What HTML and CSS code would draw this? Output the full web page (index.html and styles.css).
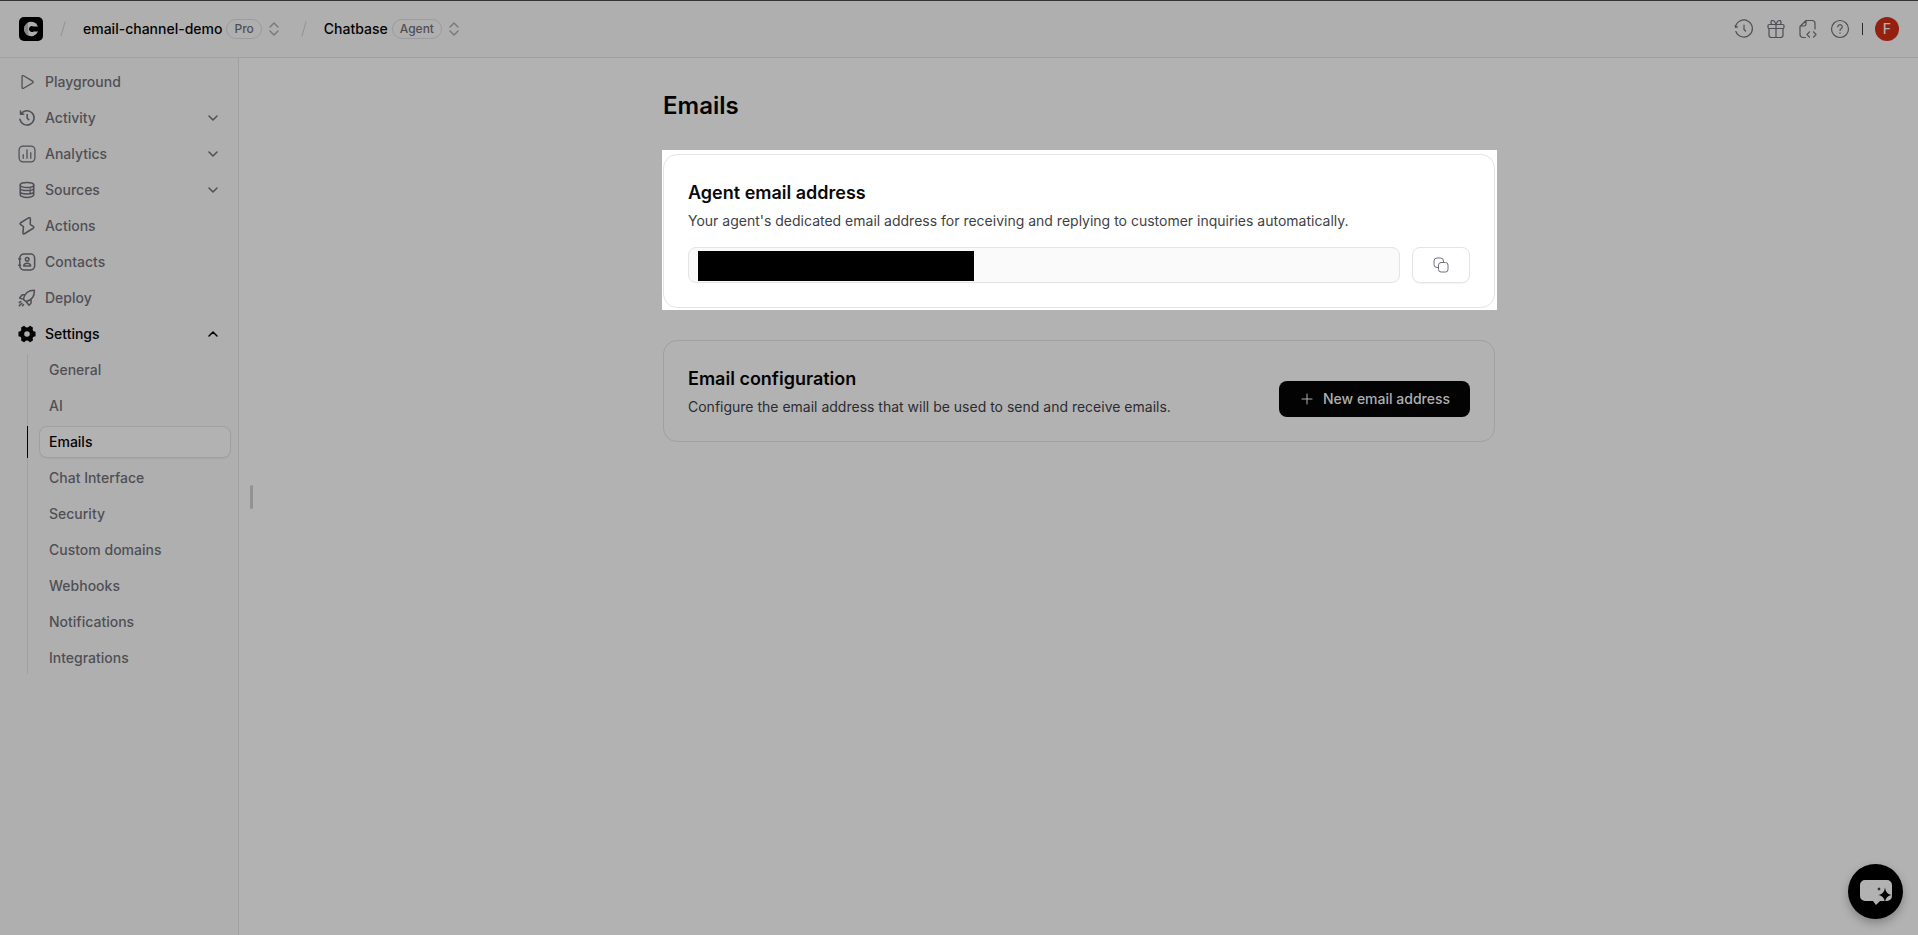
FILE: index.html
```html
<!DOCTYPE html>
<html lang="en">
<head>
<meta charset="utf-8">
<title>Emails</title>
<link rel="stylesheet" href="styles.css">
</head>
<body>
<header class="topbar">
  <nav class="crumbs" aria-label="Breadcrumb">
    <a class="logo" href="#" aria-label="Home">
      <svg width="24" height="24" viewBox="0 0 24 24"><rect width="24" height="24" rx="5" fill="#000"/><path d="M19 9.500A7.200 7.200 0 1 0 19 14.500H14.600A3 3 0 1 1 14.600 9.500Z" fill="#afafaf"/><path d="M9 5.800A7.200 7.200 0 0 0 9.500 18.700L9 12Z" fill="#85858c"/></svg>
    </a>
    <svg class="slash" width="6" height="16" viewBox="0 0 6 16"><path d="M5 1L1 15"/></svg>
    <div class="crumb">
      <a href="#">email-channel-demo</a><span class="pill">Pro</span>
      <button class="icon-btn updown" aria-label="Switch workspace"><svg width="12" height="16" viewBox="0 0 12 16"><path d="M2 6l4-4 4 4M2 10l4 4 4-4"/></svg></button>
    </div>
    <svg class="slash" width="6" height="16" viewBox="0 0 6 16"><path d="M5 1L1 15"/></svg>
    <div class="crumb">
      <a href="#">Chatbase</a><span class="pill">Agent</span>
      <button class="icon-btn updown" aria-label="Switch agent"><svg width="12" height="16" viewBox="0 0 12 16"><path d="M2 6l4-4 4 4M2 10l4 4 4-4"/></svg></button>
    </div>
  </nav>
  <div class="tools">
    <button class="icon-btn" aria-label="History"><svg class="ico thin" viewBox="0 0 20 20"><path d="M1.500 8A8.500 8.500 0 1 1 1.900 12.500M1.200 6.500L1.600 8.300 3.500 7.800M10 6v4.500l1.500 1.500"/></svg></button>
    <button class="icon-btn" aria-label="Gifts"><svg class="ico thin" viewBox="0 0 20 20"><rect x="2" y="5.500" width="16" height="4" rx="1.200"/><path d="M3 9.500V16a2.500 2.500 0 0 0 2.500 2.500h9A2.500 2.500 0 0 0 17 16V9.500M10 5.500v13M10 5.500C9 2.500 7.500 1.200 6 1.600S4.500 4.500 6 5.500M10 5.500c1-3 2.500-4.300 4-3.900s1.500 2.900 0 3.900"/></svg></button>
    <button class="icon-btn" aria-label="Documentation"><svg class="ico thin" viewBox="0 0 20 20"><path d="M7.500 18.500H5A3 3 0 0 1 2 15.500V7.500L8 1.500h6a3 3 0 0 1 3 3V10M8 1.500V5a2 2 0 0 1-2 2H2.200M11.500 12.800L9 15.500l2.500 2.700M15.500 12.800l2.500 2.700-2.500 2.700"/></svg></button>
    <button class="icon-btn" aria-label="Help"><svg class="ico thin" viewBox="0 0 20 20"><circle cx="10" cy="10" r="8.500"/><path d="M7.800 7.800a2.200 2.200 0 1 1 3.300 2c-.8.500-1.100.9-1.100 1.700M10 13.800v.4"/></svg></button>
    <span class="divider"></span>
    <button class="avatar">F</button>
  </div>
</header>
<div class="shell">
  <aside class="sidebar">
    <nav aria-label="Agent">
      <a class="item" href="#"><svg class="ico thin" viewBox="0 0 20 20"><path d="M4.500 4v12c0 1 .8 1.500 1.700 1l10-5.800c.9-.5.900-1.700 0-2.200L6.200 3c-.9-.5-1.700 0-1.700 1Z"/></svg>Playground</a>
      <button class="item"><svg class="ico" viewBox="0 0 20 20"><path d="M2.800 2.200v3.600h3.600M3.200 5.800A7.900 7.900 0 1 1 2.200 11.500M10.200 6v4.300l1.800 1.500"/></svg>Activity<svg class="chev" viewBox="0 0 12 12"><path d="M2 4l4 4 4-4"/></svg></button>
      <button class="item"><svg class="ico thin" viewBox="0 0 20 20"><rect x="1.200" y="1.200" width="17.600" height="17.600" rx="4.500"/><path d="M5.800 14.800v-4M10 14.800V5.500M14.200 14.800V8.500"/></svg>Analytics<svg class="chev" viewBox="0 0 12 12"><path d="M2 4l4 4 4-4"/></svg></button>
      <button class="item"><svg class="ico" viewBox="0 0 20 20"><ellipse cx="10" cy="4.500" rx="7.500" ry="2.800"/><path d="M2.500 4.500v10.800c0 1.600 3.400 3 7.500 3s7.500-1.400 7.500-3V4.500M2.500 8c0 1.500 3.400 2.600 7.500 2.600S17.500 9.500 17.500 8M2.500 11.700c0 1.500 3.400 2.700 7.500 2.700s7.500-1.200 7.500-2.700M13.500 8.500v.2M13.500 12.200v.2"/></svg>Sources<svg class="chev" viewBox="0 0 12 12"><path d="M2 4l4 4 4-4"/></svg></button>
      <a class="item" href="#"><svg class="ico" viewBox="0 0 20 20"><path d="M11.700 1L3 6.400c-.9.600-.9 1.500-.1 2l2.600 1.700c.5.300.6.700.5 1.200L5.500 17.600c-.1 1.100.8 1.600 1.600 1l9.800-6.100c.9-.6.900-1.500.1-2l-2.800-1.700c-.5-.3-.6-.7-.6-1.200l.2-5.500c0-1.200-1-1.700-2.100-1.100Z"/></svg>Actions</a>
      <a class="item" href="#"><svg class="ico" viewBox="0 0 20 20"><rect x="2" y="1.200" width="16.500" height="17.600" rx="4.500"/><circle cx="10.200" cy="7" r="2"/><path d="M6.500 14.500c-.5-2 1.500-3 3.700-3s4.200 1 3.700 3ZM.8 6.500h2M.8 13.500h2"/></svg>Contacts</a>
      <a class="item" href="#"><svg class="ico" viewBox="0 0 20 20"><path d="M6 11.500C7 6 11 1.500 18.200 1.500c.3 6.500-3.700 11-9.200 12.500ZM6 11.500L9 14M7.800 6.500H5.500a2 2 0 0 0-1.700.9L1.800 10l4.200 1.500M9 14l3.200 4 1.700-1.600c.4-.4.600-.9.600-1.500v-3.400M1.500 15l1.500-1M1.500 18.500l2.800-2.600M5 18.500l1.200-1.200"/></svg>Deploy</a>
      <button class="item current" aria-expanded="true"><svg class="ico" viewBox="0 0 20 20"><path class="solid" fill-rule="evenodd" d="M7.600 1.600a1 1 0 0 0-1.400-.5L3.900 2.400a1 1 0 0 0-.4 1.400C4.200 5.300 3.200 7 1.500 7.100a1 1 0 0 0-1 1v3.800a1 1 0 0 0 1 1c1.700.1 2.700 1.800 2 3.300a1 1 0 0 0 .4 1.400l2.300 1.300a1 1 0 0 0 1.400-.5c1-1.500 3.800-1.500 4.800 0a1 1 0 0 0 1.400.5l2.300-1.300a1 1 0 0 0 .4-1.400c-.7-1.500.3-3.200 2-3.300a1 1 0 0 0 1-1V8.100a1 1 0 0 0-1-1c-1.700-.1-2.700-1.800-2-3.300a1 1 0 0 0-.4-1.400l-2.300-1.300a1 1 0 0 0-1.400.5c-1 1.500-3.800 1.500-4.800 0ZM10 6.900a3.100 3.100 0 1 1 0 6.200 3.100 3.100 0 0 1 0-6.200Z"/></svg>Settings<svg class="chev" viewBox="0 0 12 12"><path d="M2 8l4-4 4 4"/></svg></button>
      <ul class="sub">
        <li><a href="#">General</a></li>
        <li><a href="#">AI</a></li>
        <li class="active"><a href="#" aria-current="page">Emails</a></li>
        <li><a href="#">Chat Interface</a></li>
        <li><a href="#">Security</a></li>
        <li><a href="#">Custom domains</a></li>
        <li><a href="#">Webhooks</a></li>
        <li><a href="#">Notifications</a></li>
        <li><a href="#">Integrations</a></li>
      </ul>
    </nav>
  </aside>
  <div class="grip"></div>
  <main class="main">
    <div class="content">
      <h1>Emails</h1>
      <div class="spotlight">
        <section class="card light">
          <h2 id="agent-email">Agent email address</h2>
          <p>Your agent's dedicated email address for receiving and replying to customer inquiries automatically.</p>
          <div class="field-row">
            <div class="field">
              <input type="text" readonly aria-labelledby="agent-email">
              <span class="redaction"></span>
            </div>
            <button class="copy" aria-label="Copy"><svg viewBox="0 0 16 16"><rect x="5.500" y="5.500" width="9.500" height="9.500" rx="2.500"/><path d="M5.500 10.500H4A3 3 0 0 1 1 7.500V4A3 3 0 0 1 4 1h3.500a3 3 0 0 1 3 3v1.500"/></svg></button>
          </div>
        </section>
      </div>
      <section class="card split">
        <div>
          <h2>Email configuration</h2>
          <p>Configure the email address that will be used to send and receive emails.</p>
        </div>
        <button class="primary"><svg viewBox="0 0 12 12"><path d="M6 1v10M1 6h10"/></svg>New email address</button>
      </section>
    </div>
  </main>
</div>
<button class="chat" aria-label="Open chat"><svg width="32" height="28" viewBox="0 0 32 28"><path d="M5 2h22a5 5 0 0 1 5 5v11a5 5 0 0 1-5 5h-7l-4 4-3-4H5a5 5 0 0 1-5-5V7a5 5 0 0 1 5-5Z" fill="#b2b2b2"/><path d="M25 9.500c.8 5 2.500 6.700 7 7.500-4.500.8-6.200 2.500-7 7.500-.8-5-2.500-6.700-7-7.500 4.500-.8 6.200-2.500 7-7.500ZM19 9l.6 1.400L21 11l-1.400.6L19 13l-.6-1.400L17 11l1.400-.6Z"/></svg></button>
</body>
</html>
```
FILE: styles.css
```css
* { box-sizing: border-box; }
body {
  margin: 0;
  min-height: 100vh;
  display: flex;
  flex-direction: column;
  background: #b2b2b2;
  color: #030304;
  font: 500 14px/20px Inter, sans-serif;
}
a { color: inherit; text-decoration: none; }
button { font: inherit; color: inherit; border: 0; padding: 0; background: none; cursor: pointer; }
svg { display: block; flex: none; fill: none; stroke-linecap: round; stroke-linejoin: round; }
h1, h2, p, ul { margin: 0; padding: 0; }

.topbar {
  display: flex;
  align-items: center;
  justify-content: space-between;
  height: 58px;
  padding: 0 19px;
  background: #afafaf;
  border-top: 1px solid #333336;
  border-bottom: 1px solid #a0a0a2;
}
.crumbs, .crumb, .tools { display: flex; align-items: center; }
.crumbs { gap: 17px; }
.crumb { gap: 4px; }
.crumb + .slash { margin-left: 4px; }
.slash { stroke: #929296; }
.pill {
  padding: 0 7px;
  border: 1px solid #9c9c9f;
  border-radius: 10px;
  font-size: 12px;
  line-height: 18px;
  color: #4f4f55;
}
.updown { margin-left: 2px; }
.updown svg { stroke: #77777c; stroke-width: 1.4; }
.tools { gap: 12px; }
.icon-btn { display: block; }
.ico { width: 18px; height: 18px; stroke: currentColor; stroke-width: 1.7; }
.thin { stroke-width: 1.4; }
.tools .ico { width: 20px; height: 20px; color: #4f4f55; stroke-width: 1.2; }
.divider { width: 1px; height: 12px; background: #2b2b2e; }
.avatar {
  width: 24px;
  height: 24px;
  border-radius: 50%;
  background: #94200f;
  color: #b2b2b2;
}

.shell { flex: 1; display: flex; }
.sidebar {
  width: 239px;
  padding: 8px 7px;
  background: #afafaf;
  border-right: 1px solid #a0a0a2;
  color: #4f4f55;
}
.sidebar nav { display: flex; flex-direction: column; gap: 4px; }
.item {
  display: flex;
  align-items: center;
  gap: 9px;
  height: 32px;
  padding: 0 12px 0 11px;
  text-align: left;
}
.chev { width: 12px; height: 12px; margin-left: auto; stroke: currentColor; stroke-width: 1.5; }
.current, .active { color: #030304; }
.solid { fill: currentColor; stroke: none; }
.sub {
  display: flex;
  flex-direction: column;
  gap: 4px;
  margin-left: 20px;
  list-style: none;
  border-left: 1px solid #a0a0a2;
}
.sub li { margin-left: -1px; padding-left: 11px; border-left: 1px solid transparent; }
.sub a { display: block; padding: 5px 9px; border: 1px solid transparent; border-radius: 8px; }
.sub .active { border-left-color: #030304; }
.active a { background: #b2b2b2; border-color: #a0a0a2; box-shadow: 0 1px 1px #a8a8aa; }
.grip {
  align-self: center;
  width: 3px;
  height: 24px;
  margin: 0 -13px 0 11px;
  border-radius: 2px;
  background: #929294;
}

.main { flex: 1; padding: 32px 24px; }
.content { max-width: 832px; margin: 0 auto; }
h1 { font-size: 24px; line-height: 32px; font-weight: 600; }
h2 { font-size: 18px; line-height: 28px; font-weight: 600; }
p { margin-top: 4px; font-weight: 400; color: #2c2c30; }
.spotlight { margin: 28px -2px 30px -1px; padding: 4px 2px 2px 1px; background: #fff; }
.card { padding: 24px; border: 1px solid #a0a0a2; border-radius: 14px; }
.light { border-color: #e4e4e7; }
.light h2 { color: #09090b; }
.light p { color: #3f3f46; }
.field-row { display: flex; gap: 12px; margin-top: 16px; }
.field { position: relative; flex: 1; }
.field input {
  display: block;
  width: 100%;
  height: 36px;
  border: 1px solid #e4e4e7;
  border-radius: 8px;
  background: #fafafa;
}
.redaction { position: absolute; left: 10px; top: 4px; width: 276px; height: 30px; background: #000; }
.copy {
  display: grid;
  place-items: center;
  width: 58px;
  height: 36px;
  border: 1px solid #e4e4e7;
  border-radius: 8px;
  box-shadow: 0 1px 1px #f4f4f5;
}
.copy svg { width: 16px; height: 16px; stroke: #71717a; }
.split { display: flex; align-items: flex-end; justify-content: space-between; margin-top: 30px; }
.primary {
  display: flex;
  align-items: center;
  gap: 10px;
  height: 36px;
  padding: 0 20px 0 22px;
  border-radius: 8px;
  background: #030304;
  color: #afafaf;
}
.primary svg { width: 12px; height: 12px; stroke: currentColor; }

.chat {
  position: fixed;
  right: 15px;
  bottom: 16px;
  display: grid;
  place-items: center;
  width: 55px;
  height: 55px;
  border-radius: 50%;
  background: #000;
  box-shadow: 0 4px 10px #0004;
}
.chat path:last-child { fill: #000; }
```
